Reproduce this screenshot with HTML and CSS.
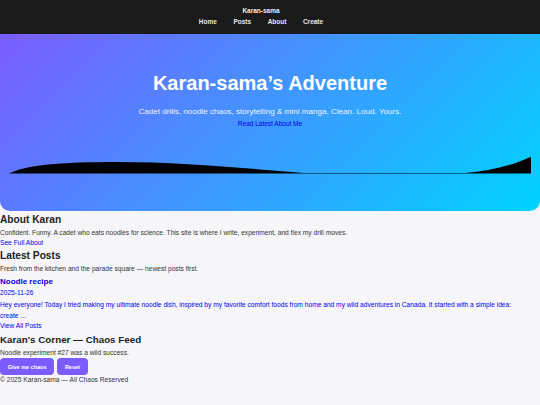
FILE: index.html
```html
<!DOCTYPE html>
<html lang="en">
  <head>
    <meta charset="UTF-8" />
    <meta name="viewport" content="width=device-width, initial-scale=1.0" />
    <title>Karan-sama's Adventure</title>
    <link rel="stylesheet" href="styles.css">
  </head>
  <body>
    <header class="site-header">
      <div class="brand">Karan-sama</div>
      <nav class="nav">
        <a href="#">Home</a>
        <a href="#">Posts</a>
        <a href="#">About</a>
        <a href="#">Create</a>
      </nav>
    </header>

    <!-- Hero -->
    <section class="hero">
      <h1>Karan-sama’s Adventure</h1>
      <p class="tagline">Cadet drills, noodle chaos, storytelling &amp; mini manga. Clean. Loud. Yours.</p>
      <a class="hero-link" href="#">Read Latest About Me</a>
      <svg class="wave" viewBox="0 0 522 19" preserveAspectRatio="none">
        <path d="M0,18.6 C15,11 40,7.5 100,7 C170,6.5 230,13 295,18 L456,18 C480,16 505,10 522,1.7 L522,18.6 Z" />
      </svg>
    </section>

    <!-- About -->
    <section>
      <h2>About Karan</h2>
      <p>Confident. Funny. A cadet who eats noodles for science. This site is where I write, experiment, and flex my drill moves.</p>
      <a href="#">See Full About</a>
    </section>

    <!-- Posts -->
    <section>
      <h2>Latest Posts</h2>
      <p>Fresh from the kitchen and the parade square — newest posts first.</p>
      <a class="post" href="#">
        <h3>Noodle recipe</h3>
        <span class="post-date">2025-11-26</span>
        <span class="post-excerpt">Hey everyone! Today I tried making my ultimate noodle dish, inspired by my favorite comfort foods from home and my wild adventures in Canada. It started with a simple idea: create ...</span>
      </a>
      <a href="#">View All Posts</a>
    </section>

    <!-- Chaos feed -->
    <section>
      <h2 class="feed-title">Karan's Corner — Chaos Feed</h2>
      <p>Noodle experiment #27 was a wild success.</p>
      <div class="buttons">
        <button class="btn">Give me chaos</button>
        <button class="btn">Reset</button>
      </div>
    </section>

    <footer class="site-footer">© 2025 Karan-sama — All Chaos Reserved</footer>
  </body>
</html>
```

FILE: styles.css
```css
body {
  font-family: "Liberation Sans", Arial, sans-serif;
  font-size: 6.65px;
  line-height: 10.4px;
  background-color: #f6f6f9;
  color: #333;
  margin: 0;
  padding: 0;
}

a {
  color: #0000ee;
  text-decoration: none;
  display: block;
}

.site-header {
  background-color: #1a1a1a;
  color: #eee;
  text-align: center;
  padding: 6px 18px 7px 0;
  height: 21px;
  font-size: 6.5px;
}

.brand {
  font-weight: bold;
  line-height: 10px;
}

.nav {
  margin-top: 1px;
  line-height: 10px;
  display: flex;
  justify-content: center;
  gap: 16.5px;
}

.nav a {
  color: #e6e6e6;
  font-weight: bold;
}

.hero {
  background: linear-gradient(135deg, #7b5cff, #00d4ff);
  color: #fff;
  text-align: center;
  padding: 37px 9px 0;
  height: 140px;
  margin-bottom: 1.5px;
  border-radius: 0 0 10px 10px;
}

.hero h1 {
  font-size: 20px;
  line-height: 24px;
  margin: 0;
}

.tagline {
  font-size: 8.1px;
  line-height: 12.8px;
  margin: 11px 0 0;
  color: #f0f0ff;
}

.hero-link {
  display: inline-block;
  font-size: 6.5px;
  margin-top: 0.7px;
}

.wave {
  display: block;
  width: 100%;
  height: 19px;
  margin-top: 24.8px;
}

h2 {
  font-size: 10.2px;
  line-height: 14px;
  margin: 1px 0 0;
  color: #222;
}

.feed-title {
  font-size: 9.8px;
}

p {
  margin: 1px 0 0;
}

.post {
  margin-top: 1px;
}

.post h3 {
  font-size: 8px;
  line-height: 12px;
  margin: 0;
}

.post-date {
  display: block;
  margin-top: 0.5px;
}

.post-excerpt {
  display: block;
  line-height: 11px;
  max-width: 515px;
}

.post + a {
  margin-top: 0.5px;
}

.buttons {
  display: flex;
  gap: 3px;
  margin-top: 0.5px;
}

.btn {
  background-color: #7c5cff;
  color: #fff;
  border: none;
  border-radius: 4px;
  font-family: inherit;
  font-weight: bold;
  font-size: 5.5px;
  height: 16.7px;
  padding: 0 7.7px;
}

.site-footer {
  line-height: 10.4px;
}
```
